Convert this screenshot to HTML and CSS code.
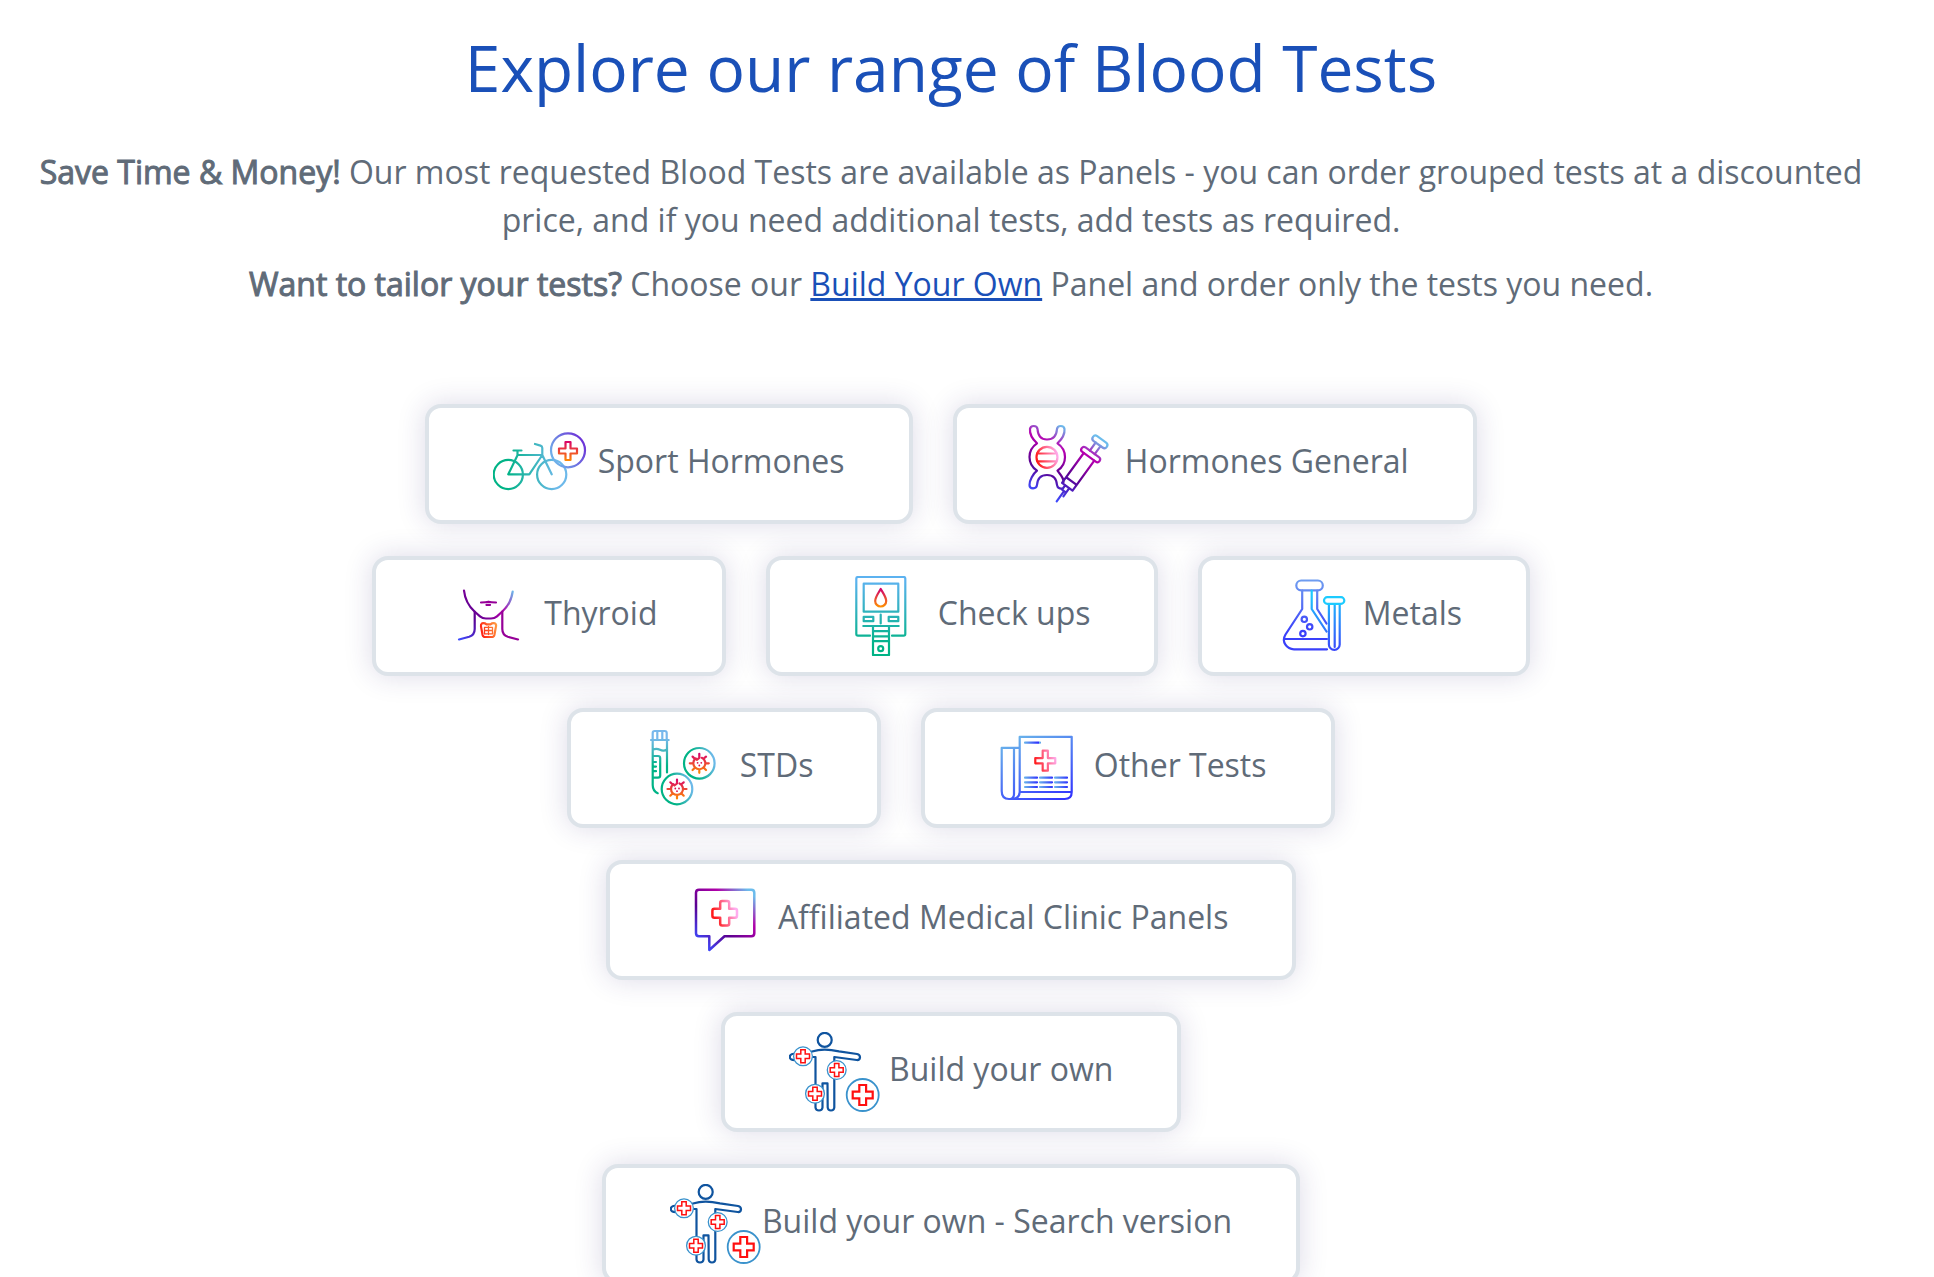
FILE: index.html
```
<!DOCTYPE html>
<html lang="en">
<head>
    <meta charset="UTF-8">
    <meta name="viewport" content="width=device-width, initial-scale=1.0">
    <title>Blood Tests</title>
    <link rel="stylesheet" href="styles.css">
</head>
<body>
    <main class="explore">
        <h1>Explore our range of Blood Tests</h1>
        <div class="intro">
            <p><strong>Save Time &amp; Money!</strong> Our most requested Blood Tests are available as Panels - you can order grouped tests at a discounted price, and if you need additional tests, add tests as required.</p>
            <p><strong>Want to tailor your tests?</strong> Choose our <a href="#build">Build Your Own</a> Panel and order only the tests you need.</p>
        </div>

        <nav class="panels" aria-label="Test categories">
            <div class="row">
                <a class="panel" href="#sport"><svg class="icon" width="96" height="80" viewBox="0 0 96 80" aria-hidden="true">
                    <defs>
                        <linearGradient id="bike" gradientUnits="userSpaceOnUse" x1="14" y1="0" x2="64" y2="0"><stop offset="0" stop-color="#00b386"/><stop offset="1" stop-color="#6db9ea"/></linearGradient>
                        <linearGradient id="bikeRing" gradientUnits="userSpaceOnUse" x1="60" y1="36" x2="90" y2="18"><stop offset="0" stop-color="#6fb4ea"/><stop offset="1" stop-color="#6d35d8"/></linearGradient>
                        <linearGradient id="hot" gradientUnits="userSpaceOnUse" x1="0" y1="-10" x2="0" y2="10"><stop offset="0" stop-color="#d8006c"/><stop offset="1" stop-color="#ff8a00"/></linearGradient>
                    </defs>
                    <g stroke="url(#bike)">
                        <circle cx="15.3" cy="50.500" r="14.6"/>
                        <circle cx="58.7" cy="50.500" r="14.6"/>
                        <path d="M20.5 26.5h8M24.5 26.5v4.8L15.3 50.3h21L49.3 31H24.7M42 20l5.500 1.600q1.800.6 1.800 2.400V31l9.400 19.300"/>
                    </g>
                    <circle cx="75" cy="26.300" r="17" stroke="url(#bikeRing)"/>
                    <path transform="translate(75 27)" stroke="url(#hot)" d="M-2.500-9h5v6.500h6.500v5H2.500V9h-5V2.500H-9v-5h6.500z"/>
                </svg> Sport Hormones</a>
                <a class="panel" href="#hormones"><svg class="icon" width="96" height="80" viewBox="0 0 96 80" aria-hidden="true">
                    <defs>
                        <linearGradient id="dna" gradientUnits="userSpaceOnUse" x1="10" y1="66" x2="42" y2="2"><stop offset="0" stop-color="#3d4bff"/><stop offset=".35" stop-color="#5b0090"/><stop offset=".7" stop-color="#b800b0"/><stop offset="1" stop-color="#6cbcec"/></linearGradient>
                        <linearGradient id="syringe" gradientUnits="userSpaceOnUse" x1="0" y1="0" x2="0" y2="-75"><stop offset="0" stop-color="#3d4bff"/><stop offset=".4" stop-color="#5b0090"/><stop offset=".75" stop-color="#b800b0"/><stop offset="1" stop-color="#6cbcec"/></linearGradient>
                        <linearGradient id="blush" gradientUnits="userSpaceOnUse" x1="-10" y1="3" x2="11" y2="-3"><stop offset="0" stop-color="#ff1a1a"/><stop offset="1" stop-color="#ffaef0"/></linearGradient>
                    </defs>
                    <path stroke="url(#dna)" d="M42.500 58C43 54 39 50 36.500 46.700C46.500 40 46.500 26 36.500 19.300C40 16 44 10 43.500 5C43 1 36.500 1 36 5C35.500 12 32 15.500 26 15.500S17 12 16.500 5C16 1 9.500 1 9 5C8.500 10 12.500 16 16 19.300C6 26 6 40 16 46.700C12 50 8.500 56 8.500 61C8.500 65.500 15.500 65.500 16 61C16.500 54 20 51 26 51S35.500 54 36 61C36.500 64 39 65 41 64.500"/>
                    <g transform="translate(26 33.300)" stroke="url(#blush)"><circle r="10.500"/><path d="M-10-3.800H10M-9.500 4H9.500"/></g>
                    <g transform="translate(35.400 77.700) rotate(36)" stroke="url(#syringe)">
                        <path d="M0-.5V-13M-2.500-13h5v4.500M-2.500-13v-5.500M2.500-13v-5.500M-6.500-18.500h13v-37M-6.500-18.500v-37M-6.500-25.500h13M-3-61v-10M3-61v-10"/>
                        <rect x="-11" y="-61" width="22" height="5.500" rx="2.700"/>
                        <rect x="-8.500" y="-77" width="17" height="6" rx="3"/>
                    </g>
                </svg> Hormones General</a>
            </div>
            <div class="row">
                <a class="panel" href="#thyroid"><svg class="icon" width="96" height="80" viewBox="0 0 96 80" aria-hidden="true">
                    <defs>
                        <linearGradient id="neck" gradientUnits="userSpaceOnUse" x1="20" y1="64" x2="76" y2="18"><stop offset="0" stop-color="#3d4bff"/><stop offset=".35" stop-color="#5b0090"/><stop offset=".7" stop-color="#b000a8"/><stop offset="1" stop-color="#6cbcec"/></linearGradient>
                        <linearGradient id="gland" gradientUnits="userSpaceOnUse" x1="40" y1="56" x2="57" y2="50"><stop offset="0" stop-color="#ff1a10"/><stop offset="1" stop-color="#ff9a40"/></linearGradient>
                    </defs>
                    <g stroke="url(#neck)">
                        <path d="M24 14.500C25 24 28.500 30 34.500 35.500L40 40.300Q42.500 42.500 46 42.500H51Q54.500 42.500 57 40.300L62.300 35.500C68.500 30 71.500 24 72.700 15.500"/>
                        <path d="M34.700 35.500V53q0 6-5.500 7.700L19 63.500"/>
                    </g>
                    <path stroke="#960098" d="M62.300 35.500V53q0 6 5.500 7.700L78 63.500M41 26.500q5-.2 7.500-.8 2.500.6 7.500.8M46.500 28.900h3.500"/>
                    <g stroke="url(#gland)">
                        <path d="M42 47.400q2.500-.7 4.500 1h4q2-1.700 4.500-1 1.500.8 1 3l-1.600 8.600q-.5 2-2.500 2h-6.800q-2 0-2.500-2L41 50.400q-.4-2.200 1-3z"/>
                        <path stroke-width="1.300" d="M48.500 50.500v8M44.500 54.500h8M44.500 51.300h8v6.600h-8z"/>
                    </g>
                </svg> Thyroid</a>
                <a class="panel" href="#checkups"><svg class="icon" width="96" height="80" viewBox="0 0 96 80" aria-hidden="true">
                    <defs>
                        <linearGradient id="meter" gradientUnits="userSpaceOnUse" x1="0" y1="4" x2="0" y2="70"><stop offset="0" stop-color="#5cb2f0"/><stop offset="1" stop-color="#00b386"/></linearGradient>
                        <linearGradient id="drop" gradientUnits="userSpaceOnUse" x1="0" y1="13" x2="0" y2="31"><stop offset="0" stop-color="#d0006e"/><stop offset="1" stop-color="#ff9000"/></linearGradient>
                    </defs>
                    <g stroke="url(#meter)">
                        <path d="M36 59.700H24q-1.700 0-1.700-1.700V2.500Q22.300 1 24 1H69.600q1.700 0 1.700 1.500V58q0 1.700-1.700 1.700H58"/>
                        <path d="M29.700 7.700h34.600v28H29.700zM29.700 40.800h9.600v4.400h-9.600zM54.700 40.800h9.600v4.400h-9.600zM46.700 38.500v9M29.300 50h35.400"/>
                        <path d="M39 50v29h16V50M39 55.200h16M39 60.300h16M39 65.200h16"/>
                        <circle cx="46.700" cy="72.700" r="2.500"/>
                    </g>
                    <path stroke="url(#drop)" d="M46.700 13C44.500 17 41.200 21 41.200 25a5.500 5.500 0 0 0 11 0C52.200 21 49 17 46.700 13z"/>
                </svg> Check ups</a>
                <a class="panel" href="#metals"><svg class="icon" width="88" height="80" viewBox="0 0 88 80" aria-hidden="true">
                    <defs>
                        <linearGradient id="flask" gradientUnits="userSpaceOnUse" x1="0" y1="4" x2="0" y2="56"><stop offset="0" stop-color="#6f9df0"/><stop offset="1" stop-color="#3a40fa"/></linearGradient>
                        <linearGradient id="tube" gradientUnits="userSpaceOnUse" x1="0" y1="18" x2="0" y2="74"><stop offset="0" stop-color="#1ccbff"/><stop offset="1" stop-color="#3a48fa"/></linearGradient>
                    </defs>
                    <g stroke="url(#flask)">
                        <rect x="30.300" y="4.500" width="26.500" height="9.800" rx="4.900"/>
                        <path d="M36.200 14.500V33L19.500 58.500C15 66 21 73.300 28 73.300H61M51.200 14.500V33l9.300 14.500M18.500 63H61"/>
                        <circle cx="38.300" cy="43.300" r="2.700"/><circle cx="43.700" cy="50.800" r="2.700"/><circle cx="36.900" cy="57.600" r="2.700"/>
                    </g>
                    <path stroke="url(#tube)" d="M45.700 14.500V33l14.800 22.500M62.900 28V68.500a5.400 5.400 0 0 0 10.800 0V28M68.700 28V71"/>
                    <rect x="58" y="21.200" width="20.300" height="6.600" rx="3.300" stroke="#1ccbff"/>
                </svg> Metals</a>
            </div>
            <div class="row">
                <a class="panel" href="#stds"><svg class="icon" width="96" height="80" viewBox="0 0 96 80" aria-hidden="true">
                    <defs>
                        <linearGradient id="vial" gradientUnits="userSpaceOnUse" x1="0" y1="10" x2="0" y2="38"><stop offset="0" stop-color="#78b8ec"/><stop offset="1" stop-color="#00b386"/></linearGradient>
                        <linearGradient id="dish" gradientUnits="userSpaceOnUse" x1="-4" y1="2" x2="15" y2="-3"><stop offset="0" stop-color="#00b386"/><stop offset="1" stop-color="#6db9ea"/></linearGradient>
                        <g id="virus">
                            <circle r="15.300" fill="#fff" stroke="url(#dish)"/>
                            <g stroke="url(#hot)">
                                <path d="M2.500-5.500A6 6 0 1 1-3.500-4.900M0-9.500V-5.500L-2.500-3.500M0 6v3.500M-9.500 0h3.500M6 0h3.500M-6.700-6.700l2.500 2.500M6.700-6.700L4-4.500M-6.700 6.700l2.500-2.500M6.700 6.700L4.200 4.200"/>
                            </g>
                            <g fill="#dc1050" stroke="none"><circle cx="-1.700" cy="-.5" r=".9"/><circle cx="2" cy="-.5" r=".9"/><circle cx="0" cy="2.200" r=".9"/></g>
                        </g>
                    </defs>
                    <g stroke="url(#vial)">
                        <path d="M17.700 12V5q0-2 2-2h10q2 0 2 2v7M16 12h17.700M22.300 3.500V11M27.300 3.500V11M17.700 12V57q0 6 5 8.200M32 12V44.500M18 21.500q3.500-1.500 7 .3t7-.3M18 28h5q2.200 0 2.200 2.200V47.500q0 2.200-2.200 2.200H18M19 34h2M19 38.600h2M19 43.200h2"/>
                    </g>
                    <use href="#virus" x="64.300" y="35.300"/>
                    <use href="#virus" x="42" y="61"/>
                </svg> STDs</a>
                <a class="panel" href="#other"><svg class="icon" width="96" height="80" viewBox="0 0 96 80" aria-hidden="true">
                    <defs>
                        <linearGradient id="paper" gradientUnits="userSpaceOnUse" x1="20" y1="10" x2="56" y2="84"><stop offset="0" stop-color="#6ab6ea"/><stop offset="1" stop-color="#3030ff"/></linearGradient>
                        <linearGradient id="ink" gradientUnits="userSpaceOnUse" x1="35" y1="0" x2="50" y2="0" spreadMethod="repeat"><stop offset="0" stop-color="#6ab6ea"/><stop offset="1" stop-color="#2a2aff"/></linearGradient>
                    </defs>
                    <path stroke="url(#paper)" d="M30.700 64V8.800h52V64H30.700q-.5 7-8 7M82.700 64q0 7-7 7H20q-7.300 0-7.300-8V19.800h18M25 20v46q0 4-3.500 5"/>
                    <path stroke="url(#ink)" d="M36 14.700h15M36 49.700h12M51 49.700h12M66 49.700h12M36 54.300h12M51 54.300h12M66 54.300h12M36 59h12M51 59h12M66 59h12"/>
                    <path transform="translate(56.300 32.700)" stroke="url(#blush)" d="M-2.600-10h5.200v7.400h7.400v5.200H2.600V10h-5.200V2.600H-10v-5.200h7.400z"/>
                </svg> Other Tests</a>
            </div>
            <div class="row">
                <a class="panel" href="#affiliated"><svg class="icon" width="96" height="80" viewBox="0 0 96 80" aria-hidden="true">
                    <defs>
                        <linearGradient id="bubble" gradientUnits="userSpaceOnUse" x1="28" y1="66" x2="78" y2="14"><stop offset="0" stop-color="#3d4bff"/><stop offset=".35" stop-color="#5b0090"/><stop offset=".7" stop-color="#b000a8"/><stop offset="1" stop-color="#6cbcec"/></linearGradient>
                    </defs>
                    <path stroke="url(#bubble)" stroke-width="2.500" d="M35.300 56.300H25q-3 0-3-3V12.700q0-3 3-3H77.300q3 0 3 3V53.300q0 3-3 3H50.500L35.300 70z"/>
                    <path transform="translate(50.700 33.300)" stroke="url(#blush)" stroke-width="2.500" d="M-2.500-12.300h5q2 0 2 2v5.800h5.800q2 0 2 2v5q0 2-2 2H4.500v5.800q0 2-2 2h-5q-2 0-2-2V4.500h-5.800q-2 0-2-2v-5q0-2 2-2h5.800v-5.800q0-2 2-2z"/>
                </svg> Affiliated Medical Clinic Panels</a>
            </div>
            <div class="row">
                <a class="panel" id="build" href="#build"><svg class="icon" width="92" height="80" viewBox="0 0 92 80" aria-hidden="true">
                    <defs>
                        <g id="body">
                            <g stroke="#0f549f">
                                <circle cx="35.700" cy="7.900" r="7"/>
                                <path d="M22 19.700Q30 17.600 36 17.700T50 19.300L68 22q3 .6 3 3.300-.3 3-3.300 2.700L45.300 25V75.500q-.3 3-3.300 3t-3.300-3L38.500 51.300h-5V75.500q-.3 3-3.500 3t-3.500-3V25H22M7 21.500Q.8 21.500.8 25T7 28"/>
                            </g>
                            <g fill="#fff" stroke="#3a92cc" stroke-width="1.300">
                                <circle cx="14" cy="24.300" r="9.400"/><circle cx="47.700" cy="38" r="9.400"/><circle cx="26" cy="61.700" r="9.400"/>
                                <circle cx="73.700" cy="63" r="16" stroke-width="1.800"/>
                            </g>
                            <g stroke="#ff1010" stroke-width="1.500" stroke-linejoin="miter">
                                <path id="cross" d="M11.800 17.800h4.400v4.300h4.300v4.400h-4.300v4.300h-4.400v-4.300H7.500v-4.400h4.300z"/>
                                <use href="#cross" x="33.700" y="13.700"/>
                                <use href="#cross" x="12" y="37.400"/>
                                <path stroke-width="2.200" d="M70.300 53h6.800v6.600h6.600v6.800h-6.600V73h-6.800v-6.600h-6.600v-6.800h6.600z"/>
                            </g>
                        </g>
                    </defs>
                    <use href="#body"/>
                </svg> Build your own</a>
            </div>
            <div class="row">
                <a class="panel" href="#search"><svg class="icon" width="92" height="80" viewBox="0 0 92 80" aria-hidden="true"><use href="#body"/></svg>Build your own - Search version</a>
            </div>
        </nav>
    </main>
</body>
</html>
```
FILE: styles.css
```
* {
    margin: 0;
    padding: 0;
    box-sizing: border-box;
}

body {
    background: #fff;
    color: #606b78;
    font-family: "Open Sans", sans-serif;
    font-size: 32px;
    line-height: 48px;
    overflow-x: hidden;
}

.explore {
    padding: 28px 56px 32px 24px;
    text-align: center;
}

h1 {
    color: #1a50b8;
    font-size: 64px;
    font-weight: 400;
    line-height: 80px;
    margin-bottom: 40px;
}

.intro {
    margin-bottom: 96px;
}

.intro p + p {
    margin-top: 16px;
}

.intro strong {
    font-weight: 400;
    -webkit-text-stroke: 1px currentColor;
}

.intro a {
    color: #1a50b8;
    text-decoration-thickness: 3px;
}

.panels {
    display: flex;
    flex-direction: column;
    gap: 32px;
}

.row {
    display: flex;
    flex-wrap: wrap;
    justify-content: center;
    gap: 32px 40px;
}

.panel {
    display: block;
    padding: 16px 64px;
    background: #fff;
    border: 4px solid #dde3e9;
    border-radius: 16px;
    box-shadow: 0 0 28px rgba(50, 35, 110, 0.17);
    color: inherit;
    text-decoration: none;
}

.icon {
    vertical-align: middle;
    fill: none;
    stroke-width: 2.2;
    stroke-linecap: round;
    stroke-linejoin: round;
}
```
